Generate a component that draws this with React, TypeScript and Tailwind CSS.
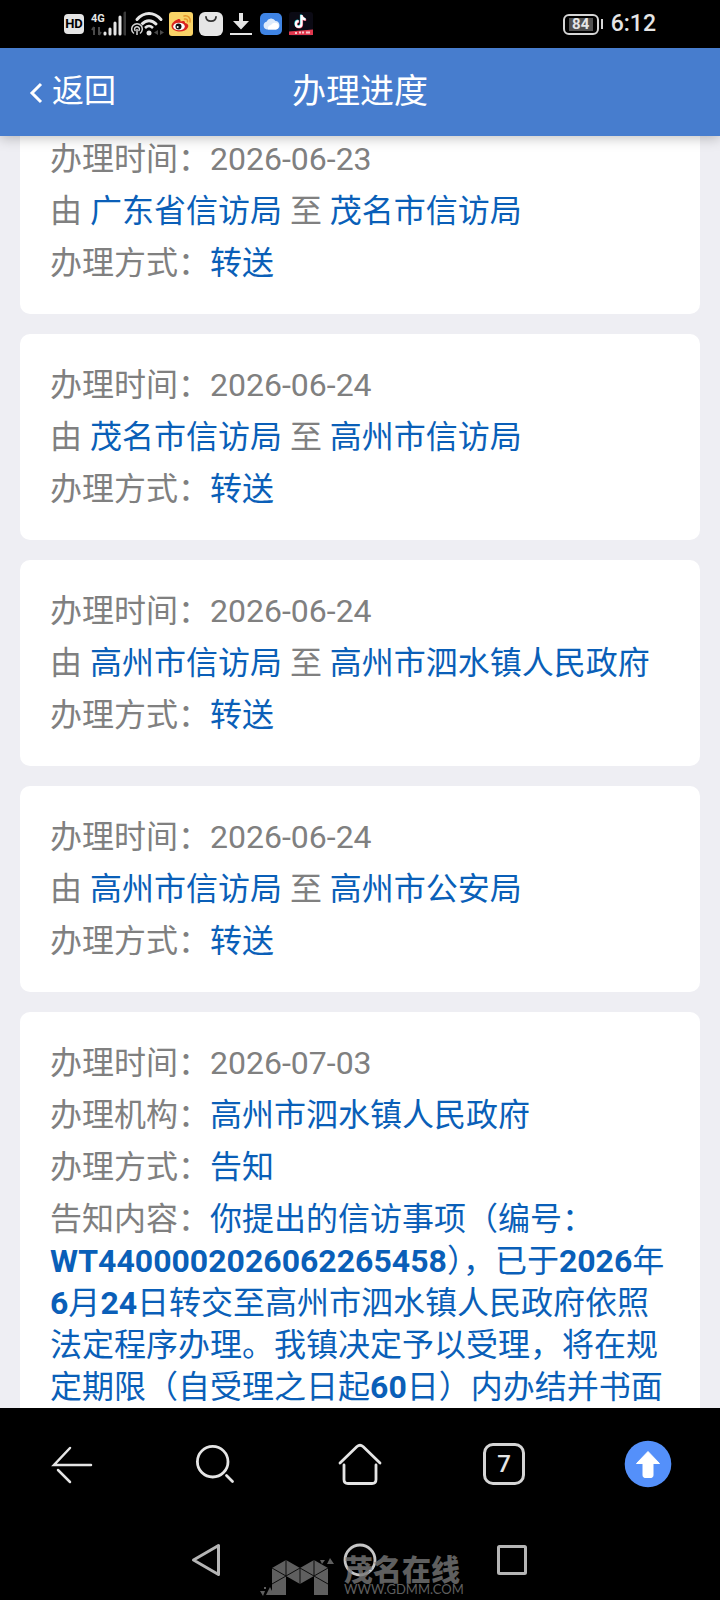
import type { ReactNode } from "react";

// ── Data ──────────────────────────────────────────────────────────────────────
interface Transfer {
  date: string;
  from: string;
  to: string;
  method: string;
}

const transfers: Transfer[] = [
  { date: "2026-06-23", from: "广东省信访局", to: "茂名市信访局", method: "转送" },
  { date: "2026-06-24", from: "茂名市信访局", to: "高州市信访局", method: "转送" },
  { date: "2026-06-24", from: "高州市信访局", to: "高州市泗水镇人民政府", method: "转送" },
  { date: "2026-06-24", from: "高州市信访局", to: "高州市公安局", method: "转送" },
];

// ── Status bar ────────────────────────────────────────────────────────────────
function SignalIcon() {
  return (
    <svg width="38" height="26" viewBox="0 0 38 26" className="ml-1">
      <text x="3" y="11" fontSize="11" fontWeight="700" fill="#e5e5e5" fontFamily="Roboto, sans-serif">
        4G
      </text>
      <g stroke="#4a4a4a" strokeWidth="2" fill="none">
        <path d="M6 16v8M6 16l-2 3M11 16v8M11 24l2-3" />
      </g>
      <g strokeWidth="3" strokeLinecap="round" stroke="#e5e5e5">
        <path d="M17 22v1M22 18v5M27 12v11M32 6v17" />
        <path d="M37 2v21" stroke="#3a3a3a" />
      </g>
    </svg>
  );
}

function WifiIcon() {
  return (
    <svg width="34" height="26" viewBox="0 0 34 26" className="ml-[5px]" fill="none">
      <g stroke="#e5e5e5" strokeWidth="3" strokeLinecap="round">
        <path d="M6 8.500C13 0.500 23 0.500 30 8.500" />
        <path d="M11 13C15 8.500 21 8.500 25 13" />
      </g>
      <path d="M14 17q4-4 8 0" stroke="#e5e5e5" strokeWidth="2.500" />
      <circle cx="18" cy="22" r="2.500" fill="#e5e5e5" />
      <circle cx="6" cy="18" r="6.500" fill="#000" />
      <g stroke="#d5d5d5" strokeWidth="1.500">
        <path d="M3 22.500A5.300 5.300 0 1 1 9 22.500" />
        <path d="M4.500 20A2.400 2.400 0 1 1 7.500 20" />
        <path d="M6 18v6" />
      </g>
      <path d="M27 19l-4 2.500 4 2.500zM29 19l4 2.500-4 2.500z" fill="#4a4a4a" />
    </svg>
  );
}

function WeiboIcon() {
  return (
    <svg width="24" height="24" viewBox="0 0 24 24" className="ml-1">
      <rect width="24" height="24" rx="3" fill="#f9d367" />
      <path
        d="M8.500 7.500c2-1 3.500 0 3 2 2-1 5-1 4.500 1.500 2.500.5 4 2 3 4.300-1.500 3.300-6 4.700-9.500 4.200C5.500 19 2.500 17 2.500 14c0-2.500 3-5.500 6-6.500z"
        fill="#d9241f"
      />
      <ellipse cx="10" cy="14.500" rx="5.800" ry="3.800" fill="#fff" />
      <circle cx="9.500" cy="14.500" r="3" fill="#111" />
      <circle cx="8.700" cy="15" r="1" fill="#fff" />
      <path d="M15 4c4-1 7 2 6 6M15.500 7c2-.4 3.400 1 3 2.700" stroke="#e6962a" strokeWidth="1.500" fill="none" strokeLinecap="round" />
    </svg>
  );
}

function BagIcon() {
  return (
    <svg width="24" height="24" viewBox="0 0 24 24" className="ml-1.5">
      <rect width="24" height="24" rx="6" fill="#e6e6e6" />
      <path d="M7 5c.5 5.500 9.500 5.500 10 0" stroke="#333" strokeWidth="1.800" fill="none" strokeLinecap="round" />
    </svg>
  );
}

function DownloadIcon() {
  return (
    <svg width="22" height="24" viewBox="0 0 22 24" className="ml-[7px]" fill="#e5e5e5">
      <path d="M9 1h4v8h6l-8 8.500L3 9h6z" />
      <rect x="0" y="21" width="22" height="2" />
    </svg>
  );
}

function CloudIcon() {
  return (
    <svg width="22" height="22" viewBox="0 0 22 22" className="ml-2">
      <rect width="22" height="22" rx="5" fill="#3f84e4" />
      <path d="M7 16.500a4 4 0 0 1-.5-7.800A5 5 0 0 1 15.500 8a4.300 4.300 0 0 1 .5 8.500z" fill="#dceafb" />
      <path d="M8 16.500a4 4 0 0 1 3-4.500 4.500 4.500 0 0 1 7-1 3.500 3.500 0 0 1-2 5.500z" fill="#fff" />
    </svg>
  );
}

function TiktokIcon() {
  return (
    <svg width="24" height="24" viewBox="0 0 24 24" className="ml-[7px]">
      <rect width="24" height="24" rx="3" fill="#0b0a14" />
      <g fill="none" strokeWidth="2.200">
        <path d="M12 2.500v9a2.800 2.800 0 1 1-2.800-2.800M12 3c.4 2.500 2 3.800 4.200 4" stroke="#25d5dd" />
        <path d="M13 3.500v9a2.800 2.800 0 1 1-2.800-2.800M13 4c.4 2.500 2 3.800 4.200 4" stroke="#e8405c" />
        <path d="M12.500 3v9a2.800 2.800 0 1 1-2.800-2.800M12.500 3.500c.4 2.500 2 3.800 4.200 4" stroke="#fff" />
      </g>
      <path d="M0 19.500L24 17.500v5.500H0z" fill="#e0384e" />
      <path d="M6 21h2M10 20.500h2M13 20.500h2M17 20.500h4" stroke="#f7c6c9" strokeWidth="2" />
    </svg>
  );
}

function StatusBar() {
  return (
    <div className="flex h-12 shrink-0 items-center bg-black pr-16 pl-16 text-[#e5e5e5]">
      <span className="flex h-5 w-5 items-center justify-center rounded-sm bg-[#e5e5e5] text-[13px] font-bold text-black">
        HD
      </span>
      <SignalIcon />
      <WifiIcon />
      <WeiboIcon />
      <BagIcon />
      <DownloadIcon />
      <CloudIcon />
      <TiktokIcon />
      <div className="ml-auto flex items-center">
        <span className="flex h-[21px] w-9 items-center justify-center rounded-md border-2 border-[#d5d5d5] p-0.5">
          <span className="flex h-full w-6 items-center justify-center bg-[#505050] text-[15px] leading-none font-bold">84</span>
        </span>
        <span className="ml-0.5 h-[10px] w-0.5 bg-[#d5d5d5]" />
        <span className="ml-2 text-[23px] font-medium">6:12</span>
      </div>
    </div>
  );
}

// ── Page header ───────────────────────────────────────────────────────────────
function Header() {
  return (
    <header className="relative z-10 grid h-22 shrink-0 grid-cols-3 items-center bg-[#477dce] pb-0.5 text-white shadow-[0_2px_12px_rgba(0,0,0,0.25)]">
      <button type="button" className="flex items-center gap-2 pl-[29px] text-[32px] leading-none">
        <svg width="15" height="22" viewBox="0 0 15 22" fill="none" className="mt-1">
          <path d="M12 2L3 11l9 9" stroke="#fff" strokeWidth="3" />
        </svg>
        返回
      </button>
      <h1 className="text-center text-[34px] leading-none">办理进度</h1>
    </header>
  );
}

// ── Cards ─────────────────────────────────────────────────────────────────────
function Card({ children }: { children: ReactNode }) {
  return <section className="rounded-[10px] bg-white px-[30px] py-[25px]">{children}</section>;
}

function Row({ label, children }: { label: string; children: ReactNode }) {
  return (
    <p className="py-[5px]">
      {label}：{children}
    </p>
  );
}

function Value({ children }: { children: ReactNode }) {
  return <span className="text-[#0a5fb8]">{children}</span>;
}

function TransferCard({ date, from, to, method }: Transfer) {
  return (
    <Card>
      <Row label="办理时间">{date}</Row>
      <p className="py-[5px]">
        由 <Value>{from}</Value> 至 <Value>{to}</Value>
      </p>
      <Row label="办理方式">
        <Value>{method}</Value>
      </Row>
    </Card>
  );
}

function NoticeCard() {
  return (
    <Card>
      <Row label="办理时间">2026-07-03</Row>
      <Row label="办理机构">
        <Value>高州市泗水镇人民政府</Value>
      </Row>
      <Row label="办理方式">
        <Value>告知</Value>
      </Row>
      <Row label="告知内容">
        <Value>
          你提出的信访事项（编号：<b>WT4400002026062265458</b>），已于<b>2026</b>年<b>6</b>月<b>24</b>
          日转交至高州市泗水镇人民政府依照法定程序办理。我镇决定予以受理，将在规定期限（自受理之日起<b>60</b>
          日）内办结并书面
        </Value>
      </Row>
    </Card>
  );
}

// ── Browser toolbar ───────────────────────────────────────────────────────────
function Toolbar() {
  return (
    <nav className="grid h-28 grid-cols-5 place-items-center">
      <button type="button" aria-label="后退">
        <svg width="44" height="44" viewBox="0 0 44 44" fill="none" stroke="#e5e5e5" strokeWidth="2.500" strokeLinecap="round">
          <path d="M41 23H4L20 6M8 28l12 12" />
        </svg>
      </button>
      <button type="button" aria-label="搜索">
        <svg width="44" height="44" viewBox="0 0 44 44" fill="none" stroke="#e5e5e5" strokeWidth="2.800" strokeLinecap="round">
          <circle cx="18.700" cy="19.700" r="15.300" />
          <path d="M32.500 33.500l6 6" />
        </svg>
      </button>
      <button type="button" aria-label="主页">
        <svg width="44" height="44" viewBox="0 0 44 44" fill="none" stroke="#e5e5e5" strokeWidth="2.800" strokeLinecap="round" strokeLinejoin="round">
          <path d="M2 21L19 4.500q3-2.500 6 0L42 21" />
          <path d="M6 23v14.500q0 4 4 4h24q4 0 4-4V23" />
        </svg>
      </button>
      <button
        type="button"
        aria-label="7 个标签页"
        className="flex h-[42px] w-[42px] items-center justify-center rounded-[10px] border-[3px] border-[#d5d5d5] text-2xl leading-none font-medium text-[#e5e5e5]"
      >
        7
      </button>
      <button type="button" aria-label="回到顶部">
        <svg width="48" height="48" viewBox="0 0 48 48">
          <circle cx="24" cy="24" r="23.300" fill="#5490fa" />
          <path d="M24 11.500L35.500 23.500H29V35.500q0 2-2 2H21q-2 0-2-2V23.500H12.500z" fill="#fff" stroke="#fff" strokeLinejoin="round" />
        </svg>
      </button>
    </nav>
  );
}

// ── System navigation ─────────────────────────────────────────────────────────
function SystemNav() {
  return (
    <nav className="relative flex h-20 items-center justify-center gap-28">
      <button type="button" aria-label="返回上一级">
        <svg width="40" height="40" viewBox="0 0 40 40" fill="none" stroke="#b5b5b5" strokeWidth="3" strokeLinejoin="round">
          <path d="M30.500 5.500V34.500L5.500 20z" />
        </svg>
      </button>
      <button type="button" aria-label="桌面">
        <svg width="40" height="40" viewBox="0 0 40 40" fill="none" stroke="#c5c5c5" strokeWidth="2.800">
          <circle cx="20" cy="20" r="15" />
        </svg>
      </button>
      <button type="button" aria-label="最近任务">
        <svg width="40" height="40" viewBox="0 0 40 40" fill="none" stroke="#b5b5b5" strokeWidth="3">
          <rect x="6.500" y="6.500" width="27" height="27" rx="1" />
        </svg>
      </button>
      <Watermark />
    </nav>
  );
}

function Watermark() {
  return (
    <div className="pointer-events-none absolute bottom-1 left-1/2 flex w-50 -translate-x-1/2 items-end text-[#777] opacity-80">
      <svg width="74" height="38" viewBox="0 0 74 38" className="shrink-0">
        <path d="M12 10L26 2L40 10L54 2L68 10V37H54V18L40 26L26 18V37H12z" fill="currentColor" />
        <path
          d="M12 10l14 8-14 8M26 2v16l14-8v16M40 10l14 8V2M68 10l-14 8 14 8"
          stroke="#111"
          fill="none"
        />
        <path d="M6 37l4-8 4 8zM0 33h5l-2 5zM4 29h2v2h-2zM60 2h5l-3 4zM67 6l3-6 4 6z" fill="currentColor" />
      </svg>
      <div className="ml-2.5 flex flex-col whitespace-nowrap">
        <span className="text-[29px] leading-[22px] font-black">茂名在线</span>
        <span className="font-[Lato] text-[13px] leading-[14px]">WWW.GDMM.COM</span>
      </div>
    </div>
  );
}

export default function App() {
  return (
    <div
      lang="zh-CN"
      className="flex h-screen flex-col overflow-hidden bg-[#eeeef3] font-[Roboto,'Noto_Sans_CJK_SC',sans-serif]"
    >
      <StatusBar />
      <Header />
      <main className="min-h-0 flex-1 overflow-hidden">
        {/* list is scrolled slightly under the header */}
        <div className="-mt-7 flex flex-col gap-5 px-5 text-[32px] leading-[42px] text-[#808080]">
          {transfers.map((t, i) => (
            <TransferCard key={i} {...t} />
          ))}
          <NoticeCard />
        </div>
      </main>
      <footer className="shrink-0 bg-black">
        <Toolbar />
        <SystemNav />
      </footer>
    </div>
  );
}
